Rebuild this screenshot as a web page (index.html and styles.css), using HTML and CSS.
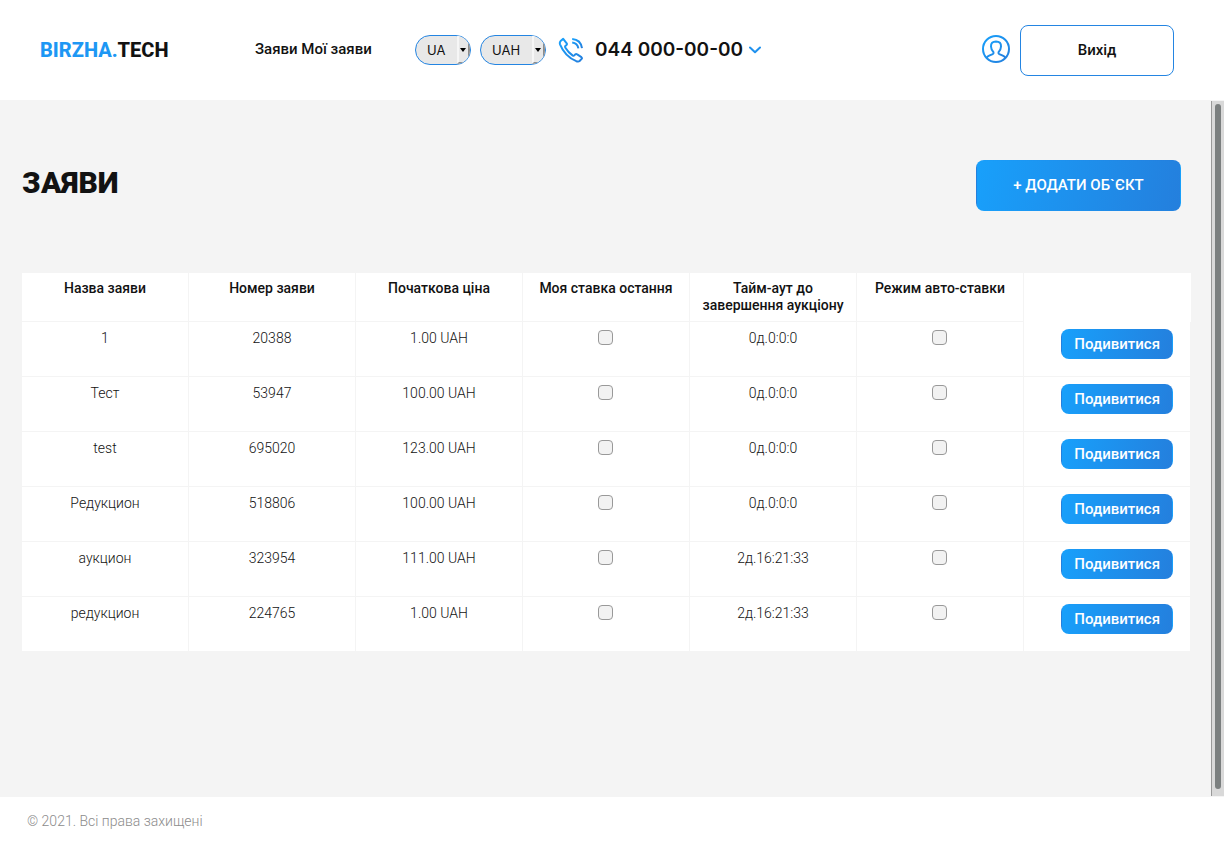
FILE: index.html
```html
<!DOCTYPE html>
<html lang="uk">
<head>
<meta charset="utf-8">
<title>BIRZHA.TECH</title>
<link rel="stylesheet" href="styles.css">
</head>
<body>
<header class="header">
  <a class="logo" href="#"><span class="logo-accent">BIRZHA.</span>TECH</a>
  <nav class="nav"><a href="#">Заяви</a> <a href="#">Мої заяви</a></nav>
  <div class="selects">
    <span class="picker">
      <select class="picker-select" aria-label="Мова"><option>UA</option></select>
      <span class="picker-arrow"></span>
    </span>
    <span class="picker">
      <select class="picker-select picker-wide" aria-label="Валюта"><option>UAH</option></select>
      <span class="picker-arrow"></span>
    </span>
  </div>
  <a class="phone" href="tel:0440000000">
    <svg class="phone-icon" viewBox="0 0 26 26" aria-hidden="true">
      <defs><linearGradient id="blue" x1="0" y1="0" x2="1" y2="1"><stop offset="0" stop-color="#18a0fb"/><stop offset="1" stop-color="#247fdd"/></linearGradient></defs>
      <g fill="none" stroke="url(#blue)" stroke-width="2" stroke-linejoin="round">
        <path d="M5.2 1.9 8.7 6.3Q9.3 7.2 8.5 8L7.3 9.1Q6.8 9.8 7.4 10.7 10.2 15.3 14.5 18.4 15.6 19.1 16.3 18.4L17.3 17.4Q18.2 16.7 19.2 17.4L23.4 20.2Q24.4 21 23.6 21.9L21.6 24Q20.4 25 18.3 24.2 6.8 19.2 2 7.3 1.4 5.5 2.6 4Z"/>
        <path d="M14.2 1.9Q22.8 2.5 24 11.2M14.2 5.6Q19.4 6.2 20.4 11.4"/>
      </g>
    </svg>
    <span>044 000-00-00</span>
    <svg class="chevron" viewBox="0 0 12 8" aria-hidden="true"><path d="M1 1.5 6 6.3 11 1.5" fill="none" stroke="#1f91ee" stroke-width="2" stroke-linecap="round" stroke-linejoin="round"/></svg>
  </a>
  <div class="account">
    <svg class="user-icon" viewBox="0 0 28 28" aria-hidden="true">
      <g fill="none" stroke="url(#blue)" stroke-width="2" stroke-linejoin="round">
        <circle cx="14" cy="14" r="13"/>
        <path d="M4.6 22.8Q5.5 21.4 7.2 20.7L10.7 19.2Q11.8 18.6 11.5 17.3 9.2 15.3 9 11.5 8.7 6.6 14 6.5 19.3 6.6 19 11.5 18.8 15.3 16.5 17.3 16.2 18.6 17.3 19.2L20.8 20.7Q22.5 21.4 23.4 22.8"/>
      </g>
    </svg>
    <button class="logout" type="button">Вихід</button>
  </div>
</header>
<div class="body">
  <main class="content">
    <div class="heading">
      <h1 class="title">ЗАЯВИ</h1>
      <button class="button button-large" type="button">+ ДОДАТИ ОБ`ЄКТ</button>
    </div>
    <table class="table">
      <thead>
        <tr><th>Назва заяви</th><th>Номер заяви</th><th>Початкова ціна</th><th>Моя ставка остання</th><th>Тайм-аут до завершення аукціону</th><th>Режим авто-ставки</th><th></th></tr>
      </thead>
      <tbody>
        <tr><td>1</td><td>20388</td><td>1.00 UAH</td><td><input class="check" type="checkbox" aria-label="Моя ставка остання"></td><td>0д.0:0:0</td><td><input class="check" type="checkbox" aria-label="Режим авто-ставки"></td><td><button class="button" type="button">Подивитися</button></td></tr>
        <tr><td>Тест</td><td>53947</td><td>100.00 UAH</td><td><input class="check" type="checkbox" aria-label="Моя ставка остання"></td><td>0д.0:0:0</td><td><input class="check" type="checkbox" aria-label="Режим авто-ставки"></td><td><button class="button" type="button">Подивитися</button></td></tr>
        <tr><td>test</td><td>695020</td><td>123.00 UAH</td><td><input class="check" type="checkbox" aria-label="Моя ставка остання"></td><td>0д.0:0:0</td><td><input class="check" type="checkbox" aria-label="Режим авто-ставки"></td><td><button class="button" type="button">Подивитися</button></td></tr>
        <tr><td>Редукцион</td><td>518806</td><td>100.00 UAH</td><td><input class="check" type="checkbox" aria-label="Моя ставка остання"></td><td>0д.0:0:0</td><td><input class="check" type="checkbox" aria-label="Режим авто-ставки"></td><td><button class="button" type="button">Подивитися</button></td></tr>
        <tr><td>аукцион</td><td>323954</td><td>111.00 UAH</td><td><input class="check" type="checkbox" aria-label="Моя ставка остання"></td><td>2д.16:21:33</td><td><input class="check" type="checkbox" aria-label="Режим авто-ставки"></td><td><button class="button" type="button">Подивитися</button></td></tr>
        <tr><td>редукцион</td><td>224765</td><td>1.00 UAH</td><td><input class="check" type="checkbox" aria-label="Моя ставка остання"></td><td>2д.16:21:33</td><td><input class="check" type="checkbox" aria-label="Режим авто-ставки"></td><td><button class="button" type="button">Подивитися</button></td></tr>
      </tbody>
    </table>
  </main>
  <div class="scroll-track"><div class="scroll-thumb"></div></div>
</div>
<footer class="footer">© 2021. Всі права захищені</footer>
</body>
</html>
```
FILE: styles.css
```css
* { box-sizing: border-box; }
body {
  margin: 0;
  min-height: 100vh;
  display: flex;
  flex-direction: column;
  font-family: Roboto, sans-serif;
  font-size: 14px;
  line-height: 17px;
  color: #121212;
  background: #fff;
}
a { color: inherit; text-decoration: none; }
button { font-family: inherit; cursor: pointer; }
.header {
  display: flex;
  align-items: center;
  height: 100px;
  padding: 0 50px 0 40px;
}
.logo { width: 215px; font-size: 20px; line-height: 24px; font-weight: 800; }
.logo-accent { color: #1d97f4; }
.nav { width: 160px; padding-bottom: 2px; font-size: 15px; font-weight: 500; line-height: 20px; }
.selects { display: flex; gap: 9px; }
.picker {
  position: relative;
  display: block;
  height: 30px;
  border: 1px solid #2485e2;
  border-radius: 15px;
  overflow: hidden;
  background: #e8e8e8;
}
.picker-select {
  appearance: none;
  display: block;
  width: 54px;
  height: 28px;
  padding: 0 0 0 11px;
  border: 0;
  background: transparent;
  font-family: Inter, sans-serif;
  font-size: 13px;
  color: #121212;
}
.picker-wide { width: 64px; }
.picker-arrow {
  position: absolute;
  top: 0;
  right: 0;
  width: 13px;
  height: 28px;
  border: solid;
  border-width: 1px 2px 2px 2px;
  border-color: #f6f6f6 #8c8c8c #8c8c8c #f6f6f6;
  background: #e8e8e8;
  pointer-events: none;
}
.picker-arrow::after {
  content: "";
  position: absolute;
  top: 11px;
  left: 1px;
  border: 3px solid transparent;
  border-top: 4px solid #000;
  border-bottom: 0;
}
.phone {
  display: flex;
  align-items: center;
  margin-left: 12px;
  font-family: Inter, sans-serif;
  font-size: 19px;
  font-weight: 600;
  line-height: 24px;
}
.phone-icon { width: 26px; height: 26px; margin-right: 11px; }
.chevron { width: 12px; height: 8px; margin-left: 6px; }
.account { display: flex; align-items: center; gap: 10px; margin-left: auto; }
.user-icon { width: 28px; height: 28px; margin-bottom: 2px; }
.logout {
  width: 154px;
  height: 51px;
  border: 1px solid #2485e2;
  border-radius: 8px;
  background: #fff;
  font-size: 15px;
  font-weight: 500;
  color: #121212;
}
.body { flex: 1; display: flex; background: #f4f4f4; }
.content { flex: 1; padding: 60px 20px 60px 22px; }
.heading {
  display: flex;
  justify-content: space-between;
  align-items: center;
  margin-bottom: 62px;
  padding-right: 10px;
}
.title { margin: 0; padding-bottom: 6px; font-size: 30px; line-height: 36px; font-weight: 900; }
.button {
  height: 30px;
  padding: 0 12px;
  border: 1px solid transparent;
  border-radius: 8px;
  background: linear-gradient(105deg, #18a0fb, #247fdd);
  font-size: 15px;
  font-weight: 500;
  color: #fff;
}
.button-large { width: 205px; height: 51px; padding-bottom: 2px; }
.table { width: 100%; table-layout: fixed; border-spacing: 0; }
.table th, .table td {
  padding: 7px;
  border: solid #f4f4f4;
  border-width: 0 1px 1px 0;
  background: #fff;
  vertical-align: top;
  text-align: center;
}
.table th { font-weight: 500; }
.table th:last-child { border-color: #fff; }
.table td { height: 55px; line-height: 19px; font-weight: 300; }
.table td:last-child { padding-right: 17px; text-align: right; }
.check {
  appearance: none;
  width: 15px;
  height: 15px;
  margin: 1px 1px 0 0;
  border: 1px solid #999;
  border-radius: 4px;
  background: #f2f2f2;
}
.scroll-track {
  display: flex;
  width: 13px;
  margin: 1px 0;
  padding: 3px;
  border-left: 1px solid #999;
  background: #d9d9d9;
}
.scroll-thumb { flex: 0 0 6px; margin-bottom: 4px; border-radius: 3px; background: #7b7f7f; }
.footer { height: 50px; padding: 16px 27px; font-weight: 300; color: #8c8c8c; }
```
